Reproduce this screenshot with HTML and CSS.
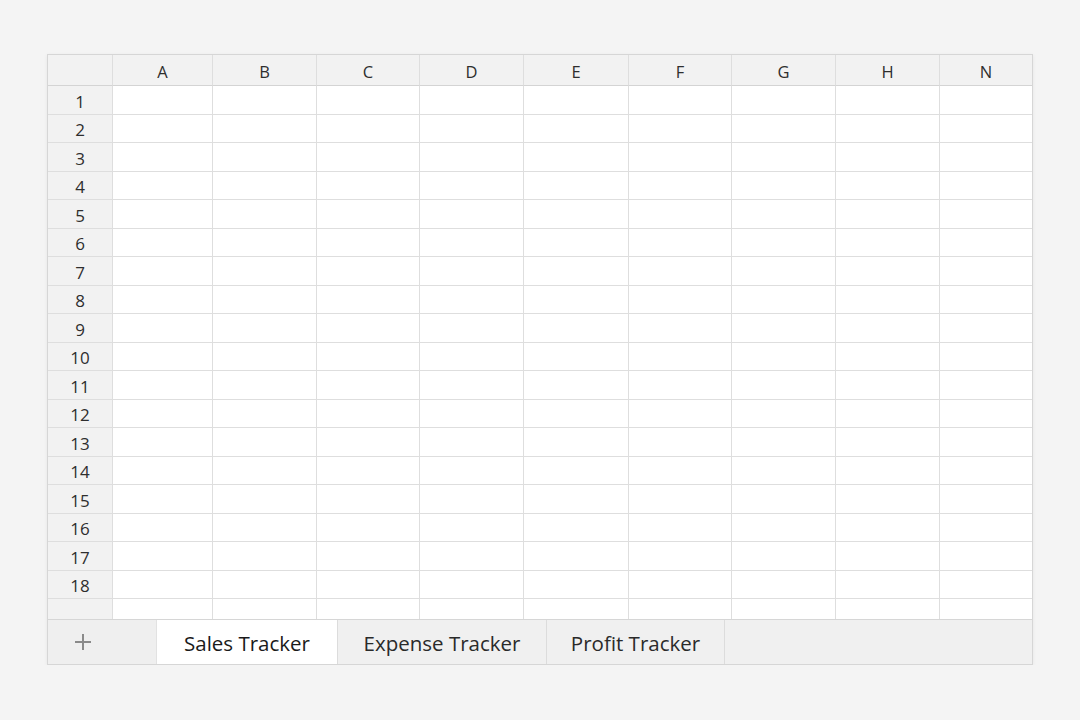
FILE: index.html
```html
<!DOCTYPE html>
<html lang="en">
<head>
	<meta charset="UTF-8">
	<meta name="viewport" content="width=device-width, initial-scale=1.0">
	<title>Sheets</title>
	<link rel="stylesheet" href="styles.css">
</head>
<body>
	<div class="sheet">
		<div class="grid" id="grid">
			<div class="cell head corner"></div>
			<div class="cell head">A</div>
			<div class="cell head">B</div>
			<div class="cell head">C</div>
			<div class="cell head">D</div>
			<div class="cell head">E</div>
			<div class="cell head">F</div>
			<div class="cell head">G</div>
			<div class="cell head">H</div>
			<div class="cell head">N</div>
		</div>
		<div class="tabs">
			<button class="add" aria-label="Add sheet">
				<svg width="18" height="18" viewBox="0 0 18 18"><path d="M9 1v16M1 9h16" stroke="#8a8a8a" stroke-width="2" fill="none"/></svg>
			</button>
			<div class="tab active">Sales Tracker</div>
			<div class="tab">Expense Tracker</div>
			<div class="tab">Profit Tracker</div>
			<div class="tab-rest"></div>
		</div>
	</div>

	<script>
		const grid = document.getElementById('grid');
		const rows = 18;
		const cols = 9;

		const addRow = (label, partial) => {
			const num = document.createElement('div');
			num.className = 'cell num' + (partial ? ' partial' : '');
			num.textContent = label;
			grid.appendChild(num);
			for (let c = 0; c < cols; c++) {
				const cell = document.createElement('div');
				cell.className = 'cell' + (partial ? ' partial' : '');
				grid.appendChild(cell);
			}
		};

		for (let r = 1; r <= rows; r++) addRow(r, false);
		addRow('', true);
	</script>
</body>
</html>
```

FILE: styles.css
```css
* {
	box-sizing: border-box;
}
body {
	margin: 0;
	background: #f4f4f4;
	font-family: "Open Sans", "Liberation Sans", sans-serif;
	color: #2b2b2b;
}
.sheet {
	margin: 54px 0 0 47px;
	width: 986px;
	border: 1px solid #d6d6d6;
	background: #fff;
	box-shadow: 0 1px 4px rgba(0, 0, 0, 0.06);
}
.grid {
	display: grid;
	grid-template-columns: 65px 100px 104px 103px 104px 105px 103px 104px 104px 92px;
	grid-template-rows: 31px repeat(18, 28.5px) 20px;
}
.cell {
	border-right: 1px solid #dedede;
	border-bottom: 1px solid #dedede;
	display: flex;
	align-items: center;
	justify-content: center;
	font-size: 16px;
}
.cell:nth-child(10n) {
	border-right: none;
}
.head {
	background: #f2f2f2;
	color: #2e2e2e;
	font-size: 16.5px;
	border-bottom-color: #d4d4d4;
	padding-top: 3px;
}
.num {
	background: #f2f2f2;
	color: #2e2e2e;
	font-size: 17px;
	padding-top: 3px;
}
.partial {
	border-bottom: none;
}
.tabs {
	display: flex;
	height: 45px;
	border-top: 1px solid #d6d6d6;
	background: #f0f0f0;
}
.add {
	width: 109px;
	border: none;
	border-right: 1px solid #e2e2e2;
	background: #efefef;
	display: flex;
	align-items: center;
	justify-content: center;
	padding: 0 38px 0 0;
}
.tab {
	display: flex;
	align-items: center;
	justify-content: center;
	font-size: 20.5px;
	color: #2a2a2a;
	border-right: 1px solid #dcdcdc;
	background: #f0f0f0;
	padding-top: 1px;
}
.tab:nth-of-type(1) {
	width: 181px;
}
.tab:nth-of-type(2) {
	width: 209px;
}
.tab:nth-of-type(3) {
	width: 178px;
}
.tab.active {
	background: #fff;
	color: #1a1a1a;
}
.tab-rest {
	flex: 1;
}
```
